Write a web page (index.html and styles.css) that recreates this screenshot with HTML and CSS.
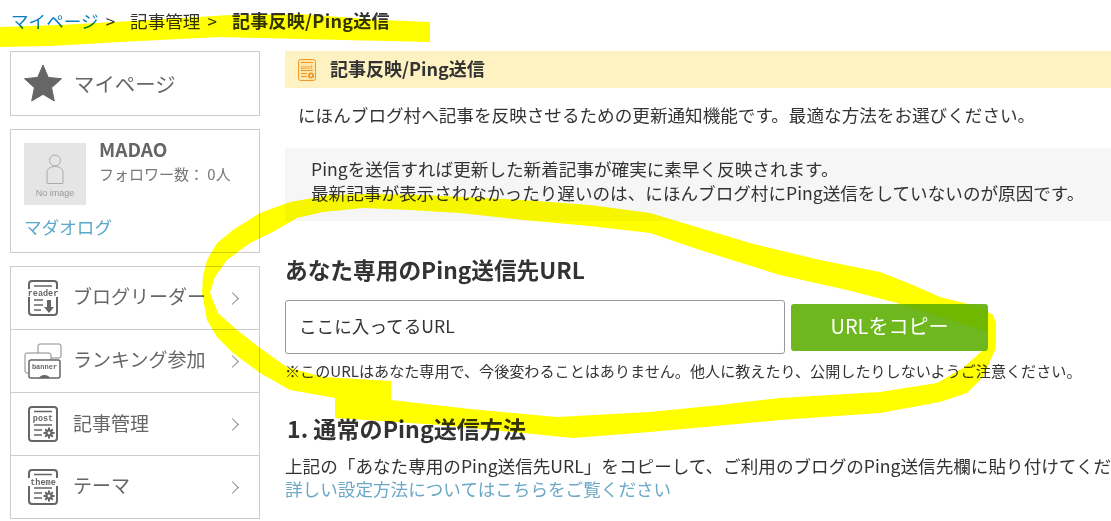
FILE: index.html
```html
<!DOCTYPE html>
<html lang="ja">
<head>
<meta charset="utf-8">
<title>記事反映/Ping送信</title>
<link rel="stylesheet" href="styles.css">
</head>
<body>
<div class="page">
  <nav class="crumbs">
    <a class="crumb-link">マイページ</a><span class="sep">&gt;</span>
    <span class="crumb">記事管理</span><span class="sep">&gt;</span>
    <strong class="crumb-now">記事反映/Ping送信</strong>
  </nav>
  <div class="columns">
    <aside class="side">
      <a class="box mypage">
        <svg class="star" viewBox="0 0 38 38"><path fill="#666" stroke="#666" stroke-linejoin="round" d="M19 1l5.300 12.400 13.200 1.300-9.900 9 2.700 13.300L19 30.300 7.700 37l2.700-13.300-9.900-9 13.200-1.300z"/></svg>
        <span>マイページ</span>
      </a>
      <section class="box profile">
        <div class="who">
          <div class="avatar">
            <svg class="avatar-icon" viewBox="0 0 18 30"><circle cx="9" cy="6.500" r="5.500" fill="none" stroke="#aaa"/><path fill="none" stroke="#aaa" d="M1 29.500V19c0-4 3-6.500 8-6.500s8 2.500 8 6.500v10.500z"/></svg>
            <span class="noimage">No image</span>
          </div>
          <div class="who-text">
            <div class="name">MADAO</div>
            <div class="followers">フォロワー数： 0人</div>
          </div>
        </div>
        <a class="blog">マダオログ</a>
      </section>
      <ul class="box menu">
        <li class="item">
          <svg class="ico" viewBox="0 0 30 36"><rect x="1" y="1" width="28" height="34" rx="3" fill="none" stroke="#666" stroke-width="2"/><path stroke="#666" stroke-width="1.500" d="M6 6h18M6 20h9M6 25h9M6 30h7"/><rect x="0" y="9" width="30" height="8" fill="#fff"/><text x="15" y="16" class="ico-t">reader</text><path fill="#666" d="M19 20h4v7h3l-5 6-5-6h3z"/></svg>
          <span class="label">ブログリーダー</span><span class="chev"></span>
        </li>
        <li class="item">
          <svg class="ico wide" viewBox="0 0 38 36"><g fill="#fff" stroke="#888"><rect x="14" y="1" width="23" height="14" rx="2"/><rect x="1" y="10" width="26" height="20" rx="2"/><rect x="5" y="17" width="31" height="18" rx="2" stroke="#666" stroke-width="1.500"/></g><text x="20.500" y="26" class="ico-b">banner</text><path fill="#666" d="M15 35a6 5 0 0 1 11 0z"/></svg>
          <span class="label">ランキング参加</span><span class="chev"></span>
        </li>
        <li class="item">
          <svg class="ico" viewBox="0 0 30 36"><rect x="1" y="1" width="28" height="34" rx="3" fill="none" stroke="#666" stroke-width="2"/><path stroke="#666" stroke-width="1.500" d="M6 5.500h18M6 19h18M6 24h8M6 29h8"/><text x="15" y="15" class="ico-t">post</text><path stroke="#666" stroke-width="2" d="M21 21.500v11M15.500 27h11M17.200 23.200l7.600 7.600M24.800 23.200l-7.600 7.600"/><circle cx="21" cy="27" r="3.600" fill="#666"/><circle cx="21" cy="27" r="1.400" fill="#fff"/></svg>
          <span class="label label-cjk">記事管理</span><span class="chev"></span>
        </li>
        <li class="item">
          <svg class="ico" viewBox="0 0 30 36"><rect x="1" y="1" width="28" height="34" rx="3" fill="none" stroke="#666" stroke-width="2"/><path stroke="#666" stroke-width="1.500" d="M6 5.500h18M6 19h18M6 24h8M6 29h8"/><rect x="0" y="9" width="30" height="8" fill="#fff"/><text x="15" y="16" class="ico-t">theme</text><path stroke="#666" stroke-width="2" d="M21 21.500v11M15.500 27h11M17.200 23.200l7.600 7.600M24.800 23.200l-7.600 7.600"/><circle cx="21" cy="27" r="3.600" fill="#666"/><circle cx="21" cy="27" r="1.400" fill="#fff"/></svg>
          <span class="label">テーマ</span><span class="chev"></span>
        </li>
      </ul>
    </aside>
    <main class="main">
      <h1 class="banner">
        <svg class="banner-ico" viewBox="0 0 18 22"><rect x=".5" y=".5" width="17" height="21" rx="2" fill="#ffe7a8" stroke="#f0982a"/><path stroke="#f0982a" d="M3 3.500h12M3 11.500h12M3 14.500h6M3 17.500h6"/><text x="9" y="9.500" class="ico-p">post</text><circle cx="13" cy="16.500" r="3" fill="#f0982a"/><circle cx="13" cy="16.500" r="1" fill="#fff"/></svg>
        <span class="banner-text">記事反映/Ping送信</span>
      </h1>
      <p class="lead">にほんブログ村へ記事を反映させるための更新通知機能です。最適な方法をお選びください。</p>
      <div class="notice">
        <p>Pingを送信すれば更新した新着記事が確実に素早く反映されます。</p>
        <p>最新記事が表示されなかったり遅いのは、にほんブログ村にPing送信をしていないのが原因です。</p>
      </div>
      <h2 class="h-url">あなた専用のPing送信先URL</h2>
      <div class="url-row">
        <div class="url-input"><span class="url-text">ここに入ってるURL</span></div>
        <button class="copy"><span class="copy-text">URLをコピー</span></button>
      </div>
      <p class="small">※このURLはあなた専用で、今後変わることはありません。他人に教えたり、公開したりしないようご注意ください。</p>
      <h2 class="h-way">1. 通常のPing送信方法</h2>
      <p class="body">上記の「あなた専用のPing送信先URL」をコピーして、ご利用のブログのPing送信先欄に貼り付けてください。</p>
      <a class="more">詳しい設定方法についてはこちらをご覧ください</a>
    </main>
  </div>
  <svg class="marker" viewBox="0 0 1111 521" width="1111" height="521">
    <path fill="#ff0" d="M0 27L60 25 150 20 230 15 300 14 380 20 430 22 430 42 300 39 220 37 120 42 50 46 0 47Z"/>
    <path fill="#ff0" fill-rule="evenodd" d="M202 293L203 276 207 260 217 243 233 230 260 213 290 202 330 195 370 194 423 195 523 200 590 205 650 213 700 228 750 243 820 260 880 272 913 285 940 297 980 307 993 315 996 323 996 340 995 350 983 377 967 393 940 402 880 413 780 420 650 432 573 438 523 433 440 425 335 418 335 398 290 390 260 373 233 353 217 337 207 320ZM210 293L218 313 237 330 260 348 287 367 323 377 391 381 391 400 470 409 557 417 650 412 720 405 780 398 880 392 937 383 963 368 983 350 988 350 988 332 897 303 847 290 780 275 700 250 650 233 590 226 523 220 460 213 410 210 363 208 323 212 297 218 273 232 250 243 227 260 215 277Z"/>
  </svg>
</div>
</body>
</html>
```
FILE: styles.css
```css
* { box-sizing: border-box; }
html, body { margin: 0; padding: 0; }
body {
  font-family: "Noto Sans CJK JP", "Noto Sans", sans-serif;
  color: #333;
  background: #fff;
}
.page {
  position: relative;
  width: 1111px;
  height: 521px;
  overflow: hidden;
}
.crumbs {
  display: flex;
  align-items: center;
  height: 42px;
  padding: 0 0 2px 11px;
  font-size: 17.600px;
  white-space: nowrap;
}
.crumb-link { color: #0b7cc0; }
.sep { margin: 0 15px 0 7px; font-size: 17px; }
.crumb-now { font-weight: 700; font-size: 18px; letter-spacing: .3px; }
.columns {
  display: flex;
  gap: 25px;
  padding: 9px 0 0 10px;
}
.side { flex: 0 0 250px; }
.box {
  border: 1px solid #ccc;
  display: block;
  margin: 0;
  padding: 0;
  list-style: none;
}
.mypage {
  display: flex;
  align-items: center;
  gap: 12px;
  height: 65px;
  padding: 0 0 2px 13px;
  font-size: 20.400px;
  color: #666;
}
.star { width: 38px; height: 38px; }
.profile {
  height: 124px;
  margin-top: 13px;
  padding: 13px;
}
.who { display: flex; gap: 13px; }
.avatar {
  width: 62px;
  height: 62px;
  background: #e5e5e5;
  display: flex;
  flex-direction: column;
  align-items: center;
  padding-top: 11px;
}
.avatar-icon { width: 18px; height: 30px; }
.noimage { font: 9px "Liberation Sans", sans-serif; color: #999; margin-top: 4px; }
.name { font-size: 19px; font-weight: 700; color: #666; line-height: 20px; margin-top: -4px; }
.followers { font-size: 15px; color: #777; line-height: 20px; margin-top: 5px; }
.blog { display: block; font-size: 17.600px; color: #5ba8c8; margin-top: 9px; line-height: 25px; }
.menu { margin-top: 13px; border-bottom: 0; }
.item {
  display: flex;
  align-items: center;
  height: 63px;
  padding: 0 17px 0 17px;
  border-bottom: 1px solid #ccc;
  color: #666;
  font-size: 19px;
}
.ico { width: 30px; height: 36px; flex: none; }
.ico.wide { width: 38px; margin-left: -4px; margin-right: -4px; }
.ico-t { font: 700 8.500px "Liberation Mono", monospace; fill: #666; text-anchor: middle; }
.ico-b { font: 700 7px "Liberation Mono", monospace; fill: #666; text-anchor: middle; }
.ico-p { font: 700 5px "Liberation Mono", monospace; fill: #f0982a; text-anchor: middle; }
.label { margin-left: 15px; flex: 1; white-space: nowrap; padding-bottom: 6px; }
.label-cjk { padding-bottom: 4px; }
.chev {
  width: 9px;
  height: 9px;
  border-top: 1.500px solid #888;
  border-right: 1.500px solid #888;
  transform: rotate(45deg);
  margin-right: 5px;
}
.main { flex: 1; min-width: 0; white-space: nowrap; }
.banner {
  display: flex;
  align-items: center;
  gap: 14px;
  height: 37px;
  margin: 0;
  padding-left: 13px;
  background: #fff2c2;
  font-size: 18px;
  font-weight: 700;
}
.banner-ico { width: 18px; height: 22px; }
.banner-text { padding-bottom: 4px; }
.lead { margin: 14px 0 0 13px; font-size: 17.600px; line-height: 25px; }
.notice {
  margin-top: 21px;
  height: 73px;
  padding: 9px 0 0 26px;
  background: #f6f6f6;
  font-size: 17.600px;
  line-height: 24px;
}
.notice p { margin: 0; }
.h-url { margin: 34px 0 0; font-size: 22.700px; font-weight: 700; line-height: 30px; }
.url-row { display: flex; align-items: center; gap: 6px; margin-top: 15px; }
.url-input {
  width: 500px;
  height: 54px;
  border: 1px solid #999;
  border-radius: 3px;
  padding-left: 13px;
  display: flex;
  align-items: center;
  font-size: 17.600px;
}
.url-text { padding-bottom: 4px; }
.copy {
  width: 197px;
  height: 47px;
  border: 0;
  border-radius: 3px;
  background: #6fb71f;
  color: #fff;
  font: inherit;
  font-size: 20px;
}
.copy-text { display: block; padding-bottom: 3px; }
.small { margin: 6px 0 0; font-size: 15.100px; line-height: 20px; }
.h-way { margin: 33px 0 0 2px; font-size: 23.100px; font-weight: 700; line-height: 30px; }
.body { margin: 11px 0 0; font-size: 17.600px; line-height: 24px; }
.more { display: block; font-size: 17.600px; line-height: 22px; color: #6aa8c6; }
.marker {
  position: absolute;
  left: 0;
  top: 0;
  mix-blend-mode: multiply;
  pointer-events: none;
}
```
